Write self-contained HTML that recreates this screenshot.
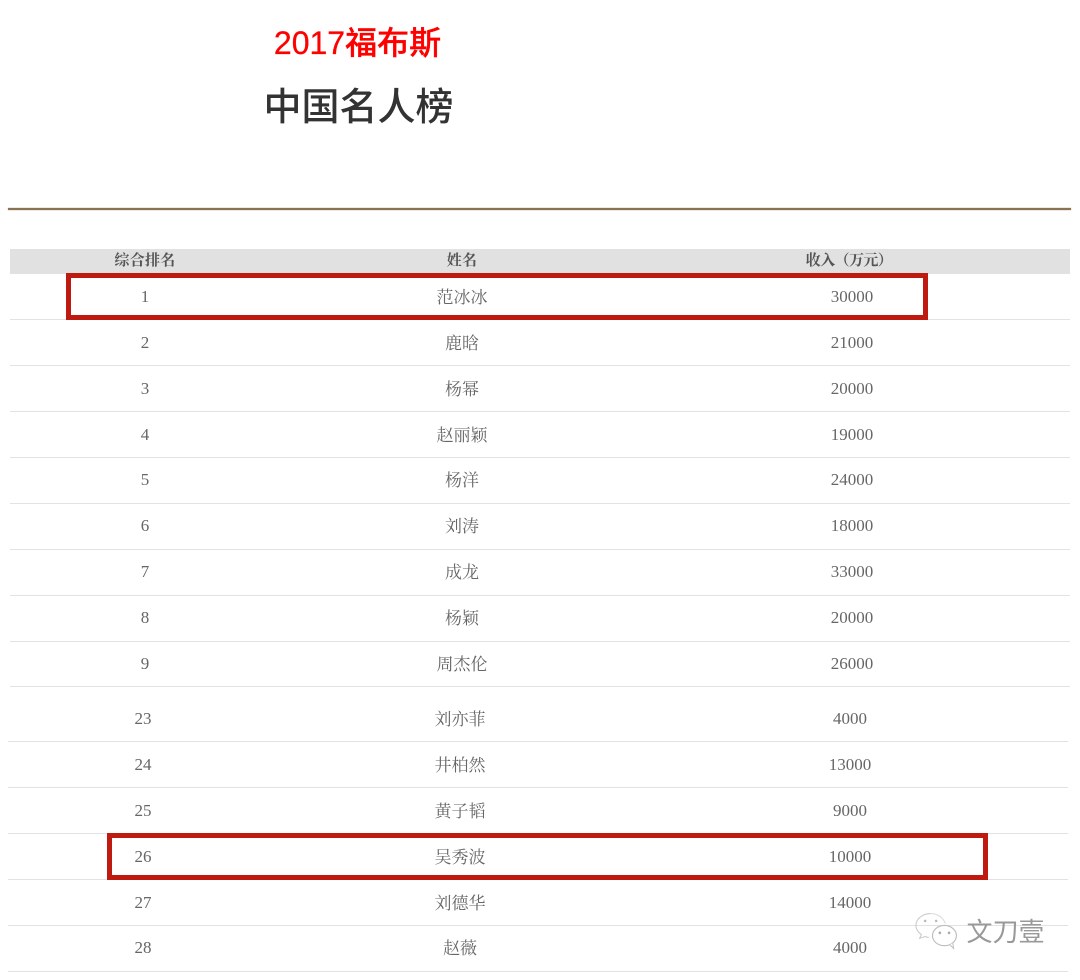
<!DOCTYPE html>
<html lang="zh">
<head>
<meta charset="utf-8">
<style>
html,body{margin:0;padding:0;background:#fff;}
#p{position:relative;width:1080px;height:980px;overflow:hidden;background:#fff;font-family:"Liberation Serif","Noto Serif CJK SC",serif;}
.t{position:absolute;transform:translateX(-50%);white-space:nowrap;font-size:17px;line-height:20px;color:#666;}
.c{margin-top:1px;}
.h{font-size:15px;font-weight:700;color:#555;letter-spacing:.3px;}
.l{position:absolute;height:1px;background:#e2e2e2;}
.a{left:10px;width:1060px;}
.b{left:8px;width:1060px;}
.s{font-family:"Liberation Sans","Noto Sans CJK SC",sans-serif;}
.box{position:absolute;box-sizing:border-box;border:5px solid #bf1a10;}
</style>
</head>
<body>
<div id="p">
<div class="t s" style="left:357.5px;top:23px;font-size:32px;line-height:40px;color:#fe0000;font-weight:500;-webkit-text-stroke:.3px #fe0000;">2017福布斯</div>
<div class="t s" style="left:358.5px;top:83px;font-size:38px;line-height:50px;color:#333;font-weight:500;">中国名人榜</div>
<div style="position:absolute;left:8px;top:208px;width:1063px;height:2px;background:#8a7352;box-shadow:0 0 1px #8a7352;"></div>
<div style="position:absolute;left:10px;top:249px;width:1060px;height:25px;background:#e1e1e1;"></div>
<div class="t h" style="left:145px;top:251px;">综合排名</div>
<div class="t h" style="left:462px;top:251px;">姓名</div>
<div class="t h" style="left:849px;top:251px;letter-spacing:-.6px;">收入（万元）</div>

<div class="l a" style="top:319px;"></div>
<div class="l a" style="top:365px;"></div>
<div class="l a" style="top:411px;"></div>
<div class="l a" style="top:457px;"></div>
<div class="l a" style="top:503px;"></div>
<div class="l a" style="top:549px;"></div>
<div class="l a" style="top:595px;"></div>
<div class="l a" style="top:641px;"></div>
<div class="l a" style="top:686px;"></div>
<div class="l b" style="top:741px;"></div>
<div class="l b" style="top:787px;"></div>
<div class="l b" style="top:833px;"></div>
<div class="l b" style="top:879px;"></div>
<div class="l b" style="top:925px;"></div>
<div class="l b" style="top:971px;"></div>

<div class="t" style="left:145px;top:287px;">1</div><div class="t c" style="left:462px;top:287px;">范冰冰</div><div class="t" style="left:852px;top:287px;">30000</div>
<div class="t" style="left:145px;top:333px;">2</div><div class="t c" style="left:462px;top:333px;">鹿晗</div><div class="t" style="left:852px;top:333px;">21000</div>
<div class="t" style="left:145px;top:379px;">3</div><div class="t c" style="left:462px;top:379px;">杨幂</div><div class="t" style="left:852px;top:379px;">20000</div>
<div class="t" style="left:145px;top:425px;">4</div><div class="t c" style="left:462px;top:425px;">赵丽颖</div><div class="t" style="left:852px;top:425px;">19000</div>
<div class="t" style="left:145px;top:470px;">5</div><div class="t c" style="left:462px;top:470px;">杨洋</div><div class="t" style="left:852px;top:470px;">24000</div>
<div class="t" style="left:145px;top:516px;">6</div><div class="t c" style="left:462px;top:516px;">刘涛</div><div class="t" style="left:852px;top:516px;">18000</div>
<div class="t" style="left:145px;top:562px;">7</div><div class="t c" style="left:462px;top:562px;">成龙</div><div class="t" style="left:852px;top:562px;">33000</div>
<div class="t" style="left:145px;top:608px;">8</div><div class="t c" style="left:462px;top:608px;">杨颖</div><div class="t" style="left:852px;top:608px;">20000</div>
<div class="t" style="left:145px;top:654px;">9</div><div class="t c" style="left:462px;top:654px;">周杰伦</div><div class="t" style="left:852px;top:654px;">26000</div>
<div class="t" style="left:143px;top:709px;">23</div><div class="t c" style="left:460px;top:709px;">刘亦菲</div><div class="t" style="left:850px;top:709px;">4000</div>
<div class="t" style="left:143px;top:755px;">24</div><div class="t c" style="left:460px;top:755px;">井柏然</div><div class="t" style="left:850px;top:755px;">13000</div>
<div class="t" style="left:143px;top:801px;">25</div><div class="t c" style="left:460px;top:801px;">黄子韬</div><div class="t" style="left:850px;top:801px;">9000</div>
<div class="t" style="left:143px;top:847px;">26</div><div class="t c" style="left:460px;top:847px;">吴秀波</div><div class="t" style="left:850px;top:847px;">10000</div>
<div class="t" style="left:143px;top:893px;">27</div><div class="t c" style="left:460px;top:893px;">刘德华</div><div class="t" style="left:850px;top:893px;">14000</div>
<div class="t" style="left:143px;top:938px;">28</div><div class="t c" style="left:460px;top:938px;">赵薇</div><div class="t" style="left:850px;top:938px;">4000</div>

<div class="box" style="left:66px;top:273px;width:862px;height:47px;"></div>
<div class="box" style="left:107px;top:833px;width:881px;height:47px;"></div>

<svg style="position:absolute;left:915px;top:911px;" width="46" height="40" viewBox="0 0 50 42">
<path d="M17 2C8 2 1 8 1 15c0 4 2 7 6 10l-2 4 6-2c1 0 2 1 4 1" fill="none" stroke="#ccc" stroke-width="1.2"/>
<path d="M17 2c8 0 14 5 16 11" fill="none" stroke="#ddd" stroke-width="1.2"/>
<ellipse cx="32" cy="26" rx="13" ry="11" fill="#fff" stroke="#bbb" stroke-width="1.2"/>
<path d="M38 36l4 4-1-6" fill="#fff" stroke="#bbb" stroke-width="1"/>
<circle cx="11" cy="10" r="1.4" fill="#bbb"/><circle cx="23" cy="10" r="1.4" fill="#bbb"/>
<circle cx="27" cy="23" r="1.4" fill="#aaa"/><circle cx="37" cy="23" r="1.4" fill="#aaa"/>
</svg>
<div class="t s" style="left:1005.5px;top:917px;font-size:26px;line-height:30px;color:#999;">文刀壹</div>
</div>
</body>
</html>
